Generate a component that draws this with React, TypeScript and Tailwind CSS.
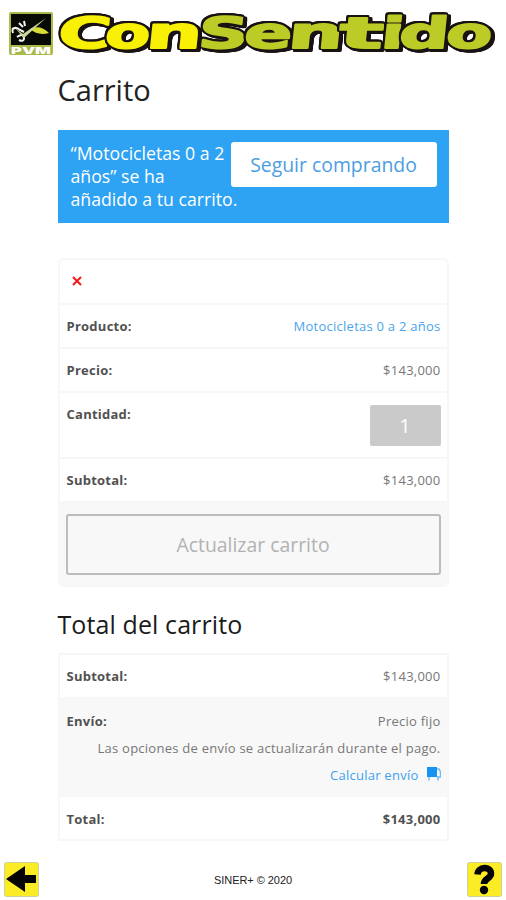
import React from 'react';

interface Letter {
    ch: string;
    x: number;
    w: number;
    fill: string;
}

const YELLOW = "#f8f005";
const LIME = "#bccb26";

const letters: Letter[] = [
    { ch: "C", x: 57, w: 53, fill: YELLOW },
    { ch: "o", x: 104, w: 45, fill: YELLOW },
    { ch: "n", x: 145, w: 56, fill: YELLOW },
    { ch: "S", x: 197, w: 50, fill: LIME },
    { ch: "e", x: 243, w: 48, fill: LIME },
    { ch: "n", x: 287, w: 55, fill: LIME },
    { ch: "t", x: 338, w: 44, fill: LIME },
    { ch: "i", x: 380, w: 23, fill: LIME },
    { ch: "d", x: 398, w: 50, fill: LIME },
    { ch: "o", x: 445, w: 46, fill: LIME },
];

function Logo() {
    return (
        <svg viewBox="0 0 506 66" className="block h-[66px] w-full">
            {/* PVM badge */}
            <rect x="9" y="12" width="44" height="43" rx="2" fill="#a9b94a" />
            <rect x="11" y="14" width="40" height="31" fill="#080a05" />
            <path d="M12 29 Q16 26 20 30 L24 32 M19 23 L23 27 M24 21 L25 26 M13 33 Q11 28 16 28 M17 37 Q24 32 24 39 Q23 42 19 40" stroke="#f4f6ee" strokeWidth="2" fill="none" />
            <path d="M30 29 Q40 24 49 33 Q38 36 30 29Z" fill="#d5dd35" />
            <path d="M15 28 L23 34 L46 18 L24 38Z" fill="#c9d49a" />
            <text x="11" y="53.5" textLength="40" lengthAdjust="spacingAndGlyphs" className="font-['Inter'] text-[9px] font-black" fill="#fff">PVM</text>
            <g className="font-['DejaVu_Sans'] text-[43px] font-bold drop-shadow-[3px_2px_0_#191212]">
                {letters.map((l, i) => (
                    <g key={i} className="[filter:drop-shadow(1.5px_0_0_#191212)_drop-shadow(-1.5px_0_0_#191212)_drop-shadow(0_1.5px_0_#191212)_drop-shadow(0_-1.5px_0_#191212)]">
                        <text
                            transform={`translate(${l.x} 47.5) skewX(-6)`}
                            textLength={l.w}
                            lengthAdjust="spacingAndGlyphs"
                            fill={l.fill}
                            stroke={l.fill}
                            strokeWidth="1.8"
                            strokeLinejoin="round"
                        >
                            {l.ch}
                        </text>
                    </g>
                ))}
            </g>
        </svg>
    );
}

interface RowProps {
    label: string;
    children: React.ReactNode;
    className: string;
}

function Row({ label, children, className }: RowProps) {
    return (
        <div className={`flex justify-between border-b-2 border-[#f7f7f7] pr-1.5 pl-[7px] ${className}`}>
            <span className="font-bold tracking-[0.25px] text-[#515151]">{label}</span>
            {children}
        </div>
    );
}

export default function App() {
    return (
        <div className="flex h-[900px] w-full flex-col overflow-hidden bg-white font-['Open_Sans','Noto_Sans',sans-serif]">
            <Logo />
            <main className="mx-auto w-[391px] text-[13px] leading-[18px] tracking-[0.25px] text-[#777]">
                <h1 className="h-16 pt-1 text-[29px] leading-10 tracking-normal text-[#222]">Carrito</h1>

                <div className="flex h-[93px] items-start bg-[#2ea2f3] pt-3 pl-[13px] text-[17.7px] leading-[23px] tracking-normal text-white">
                    <p className="w-[160px] whitespace-nowrap">“Motocicletas 0 a 2<br />años” se ha<br />añadido a tu carrito.</p>
                    <button className="h-[45px] w-[206px] rounded-[3px] bg-white text-[19.4px] text-[#4c9ee2]">Seguir comprando</button>
                </div>

                <section className="mt-[35px] h-[329px] rounded-md border-2 border-[#f7f7f7]">
                    <div className="flex h-[45px] items-center border-b-2 border-[#f7f7f7] pb-px pl-3">
                        <svg viewBox="0 0 10 10" className="size-[10px]"><path d="M1 1 L9 9 M9 1 L1 9" stroke="#f01818" strokeWidth="2" /></svg>
                    </div>
                    <Row label="Producto:" className="h-11 items-center">
                        <a className="text-[#4ba4ea]">Motocicletas 0 a 2 años</a>
                    </Row>
                    <Row label="Precio:" className="h-11 items-center"><span>$143,000</span></Row>
                    <Row label="Cantidad:" className="h-[66px] items-start pt-3">
                        <span className="h-[41px] w-[71px] rounded-[2px] bg-[#cacaca] text-center text-[20px] leading-[41px] text-white">1</span>
                    </Row>
                    <Row label="Subtotal:" className="h-11 items-center"><span>$143,000</span></Row>
                    <div className="h-[82px] bg-[#f8f8f8] px-[6px] pt-[11px]">
                        <button className="h-[61px] w-full rounded-[3px] border-2 border-[#bcbcbc] text-[19.4px] tracking-normal text-[#b2b2b2]">Actualizar carrito</button>
                    </div>
                </section>

                <h2 className="h-[66px] pt-[17px] text-[25px] leading-10 tracking-[0.1px] text-[#1b1b1b]">Total del carrito</h2>

                <section className="h-[188px] border-2 border-[#f7f7f7]">
                    <Row label="Subtotal:" className="h-11 items-center"><span>$143,000</span></Row>
                    <div className="flex h-[98px] justify-between bg-[#f8f8f8] pt-[9px] pr-1.5 pl-[7px] leading-[27px]">
                        <span className="w-0 font-bold text-[#515151]">Envío:</span>
                        <div className="text-right">
                            <p>Precio fijo</p>
                            <p>Las opciones de envío se actualizarán durante el pago.</p>
                            <a className="flex items-center justify-end gap-2 text-[#3ea2f0]">
                                Calcular envío
                                <svg viewBox="0 0 14 14" className="mb-1 size-[14px]">
                                    <path d="M0 0h10v10H0z" fill="#1594f2" />
                                    <path d="M10 2h2l1.5 3v5H10M2 10v3.5M11 10v3.5" stroke="#6dbaf5" strokeWidth="1.5" fill="none" />
                                </svg>
                            </a>
                        </div>
                    </div>
                    <div className="flex h-[43px] items-center justify-between pr-1.5 pl-[7px] font-bold text-[#515151]">
                        <span>Total:</span>
                        <span>$143,000</span>
                    </div>
                </section>
            </main>

            <footer className="mt-5 flex h-9 items-center justify-between px-1 text-[11px] text-[#222]">
                <svg viewBox="0 0 36 36" className="size-9">
                    <rect x="0.5" y="1.5" width="34" height="34" rx="2" fill="#fbed25" stroke="#cfcf9d" />
                    <path d="M2 18 L21 5 V14 H32 V22 H21 V31Z" fill="#050505" />
                </svg>
                <span className="pt-[3px] font-['Liberation_Sans',sans-serif] tracking-[-0.05px]">SINER+ © 2020</span>
                <svg viewBox="0 0 36 36" className="size-9">
                    <rect x="1.5" y="1.5" width="34" height="34" rx="2" fill="#fbed25" stroke="#cfcf9d" />
                    <path d="M11.5 13.5 C12 5 25 5 25 12.5 C25 18 18 17 18 23" stroke="#050505" strokeWidth="6.5" fill="none" />
                    <circle cx="18" cy="29" r="4.2" fill="#050505" />
                </svg>
            </footer>
        </div>
    );
}
